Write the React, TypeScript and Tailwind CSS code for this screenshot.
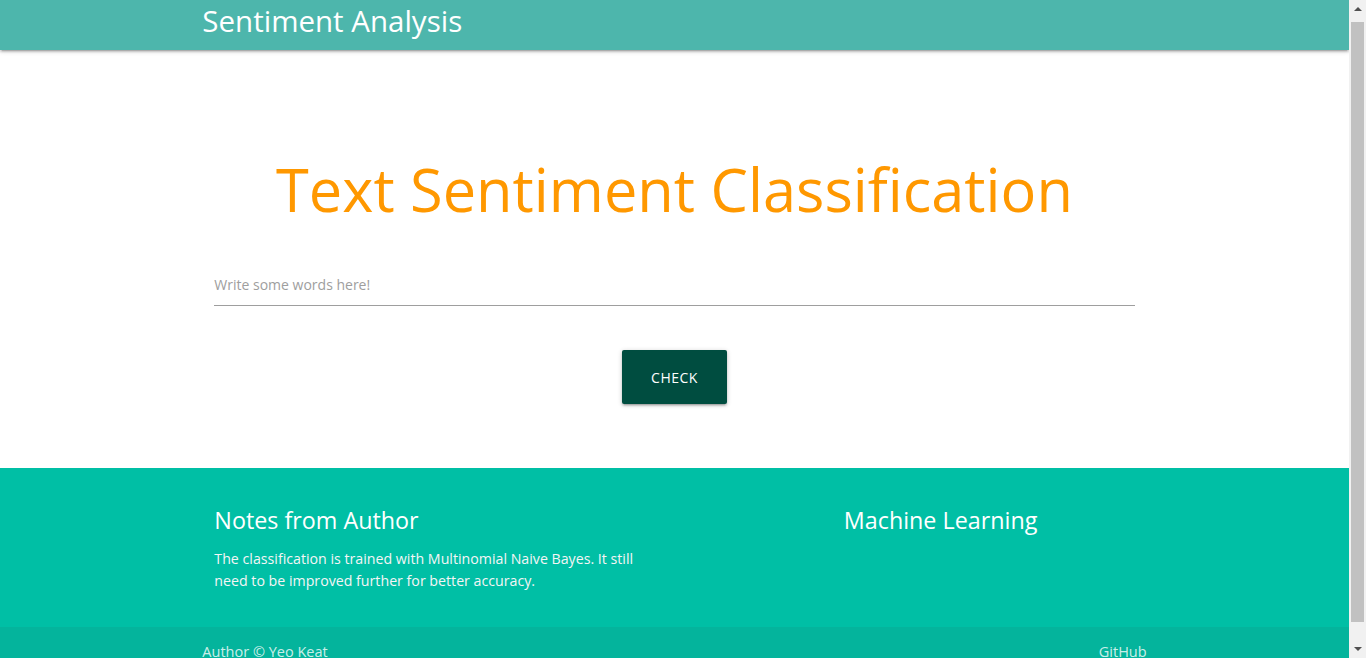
import React from "react";

const shadow =
  "shadow-[0_2px_2px_0_rgba(0,0,0,0.14),0_3px_1px_-2px_rgba(0,0,0,0.12),0_1px_5px_0_rgba(0,0,0,0.2)]";

function Scrollbar() {
  return (
    <aside className="flex h-[658px] w-[17px] shrink-0 flex-col bg-[#f1f1f1]">
      <div className="flex h-[17px] items-center justify-center">
        <svg width="8" height="5" viewBox="0 0 8 5">
          <path d="M0 5 L4 1 L8 5 Z" fill="#505050" />
        </svg>
      </div>
      <div className="mx-[2px] mt-[5px] mb-[19px] flex-1 bg-[#c1c1c1]" />
      <div className="flex h-[17px] items-center justify-center">
        <svg width="8" height="5" viewBox="0 0 8 5">
          <path d="M0 0 L4 4 L8 0 Z" fill="#505050" />
        </svg>
      </div>
    </aside>
  );
}

export default function App() {
  return (
    <div className="flex h-[658px] overflow-hidden bg-white font-['Open_Sans',sans-serif] text-[rgba(0,0,0,0.87)]">
      <div className="h-[658px] min-w-0 flex-1 overflow-hidden">
        <nav className={`relative z-10 h-[50px] bg-[#4db6ac] ${shadow}`}>
          <div className="mx-auto w-[70%]">
            <a className="block text-[29.5px] leading-[42px] text-white">Sentiment Analysis</a>
          </div>
        </nav>
        <main className="pt-[102px] pb-[64px]">
          <div className="mx-auto w-[70%]">
            <h1 className="text-center text-[59.5px] leading-[74px] text-[#ff9800]">
              Text Sentiment Classification
            </h1>
            <div className="mt-[32px] px-3">
              <input
                type="text"
                placeholder="Write some words here!"
                className="h-[48px] w-full border-b border-[#9e9e9e] bg-transparent pt-[6px] text-[14px] text-[rgba(0,0,0,0.87)] outline-none placeholder:text-[#9e9e9e]"
              />
            </div>
            <div className="mt-[44px] flex justify-center">
              <button className={`h-[54px] rounded-[2px] bg-[#004d40] px-[29px] text-[14px] tracking-[0.5px] text-white uppercase ${shadow}`}>
                Check
              </button>
            </div>
          </div>
        </main>
        <footer className="bg-[#00bfa5] pt-5 text-white">
          <div className="mx-auto flex w-[70%] pb-[35px]">
            <div className="w-1/2 px-3">
              <h5 className="mt-[18px] mb-[13px] text-[23.3px] leading-[29px]">Notes from Author</h5>
              <p className="text-[14.2px] leading-[22px] text-[#f5f5f5]">
                The classification is trained with Multinomial Naive Bayes. It still need to be improved further for better accuracy.
              </p>
            </div>
            <div className="ml-[16.6667%] w-1/3 px-3">
              <h5 className="mt-[18px] mb-[13px] text-[23.3px] leading-[29px]">Machine Learning</h5>
            </div>
          </div>
          <div className="h-[50px] bg-[rgba(51,51,51,0.08)] text-[rgba(255,255,255,0.8)]">
            <div className="mx-auto flex w-[70%] justify-between pt-[14px] text-[14.5px] leading-[22px]">
              <span>Author © Yeo Keat</span>
              <a>GitHub</a>
            </div>
          </div>
        </footer>
      </div>
      <Scrollbar />
    </div>
  );
}
